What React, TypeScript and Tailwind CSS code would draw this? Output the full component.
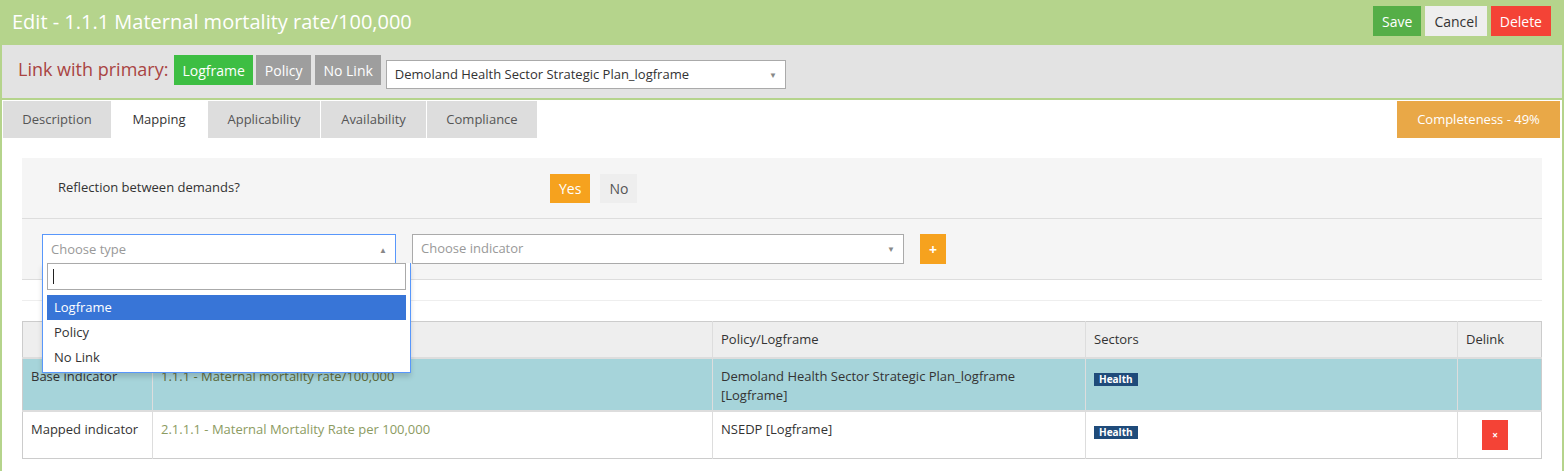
import React from "react";

const tabs = [
  { title: "Description", key: "tab_1", width: "w-[109px]" },
  { title: "Mapping", key: "tab_2", width: "w-[96px]", active: true },
  { title: "Applicability", key: "tab_3", width: "w-[113px]" },
  { title: "Availability", key: "tab_4", width: "w-[106px]" },
  { title: "Compliance", key: "tab_5", width: "w-[111px]" },
];

const HealthBadge = () => (
  <span className="inline-block bg-[#1f4b7a] px-[5px] text-[10px] font-bold leading-[13px] text-white">Health</span>
);

const Caret = ({ up }: { up?: boolean }) => (
  <span className="text-[8px] leading-none text-[#888]">{up ? "▲" : "▼"}</span>
);

const App = () => {
  return (
    <div className="min-h-[473px] bg-white font-['Open_Sans',sans-serif] text-[13px] text-[#333]">
      <div className="w-[1564px]">
        {/* header */}
        <div className="flex h-[45px] justify-between bg-[#b5d48c] pl-[12px] pr-[13px]">
          <div className="self-center pb-[2px] text-[20px] text-white">Edit - 1.1.1 Maternal mortality rate/100,000</div>
          <div className="mt-[6px] flex gap-[4px] self-start text-[14px]">
            <button className="h-[30px] bg-[#55ae47] px-[9px] text-white">Save</button>
            <button className="h-[30px] bg-[#eeeeee] px-[9px] text-[#333]">Cancel</button>
            <button className="h-[30px] bg-[#f44336] px-[9px] text-white">Delete</button>
          </div>
        </div>

        <div className="border-x-2 border-[#b5d48c]">
          {/* link with primary */}
          <div className="flex h-[55px] items-start border-b-2 border-[#b5d48c] bg-[#e3e3e3] pl-[16px]">
            <span className="mr-[6px] mt-[11px] text-[18px] leading-[26px] text-[#a94442]">Link with primary:</span>
            <button className="mt-[10px] h-[30px] bg-[#3dbe43] px-[8px] text-[14px] text-white">Logframe</button>
            <button className="ml-[3px] mt-[10px] h-[30px] bg-[#9e9e9e] px-[9px] text-[14px] text-white">Policy</button>
            <button className="ml-[4px] mt-[10px] h-[30px] bg-[#9e9e9e] px-[8px] text-[14px] text-white">No Link</button>
            <div className="ml-[5px] mt-[15px] flex h-[29px] w-[400px] items-center justify-between border border-[#aaa] bg-white pl-[8px] pr-[8px]">
              <span>Demoland Health Sector Strategic Plan_logframe</span>
              <Caret />
            </div>
          </div>

          {/* tabs */}
          <div className="flex items-start justify-between">
            <div className="flex">
              {tabs.map((tab) => (
                <div
                  key={tab.key}
                  className={
                    tab.active
                      ? `flex h-[38px] items-center justify-center bg-white pt-px text-[#333] ${tab.width}`
                      : `flex h-[38px] items-center justify-center border-l border-t border-white bg-[#dddddd] text-[#555] ${tab.width}`
                  }
                >
                  {tab.title}
                </div>
              ))}
            </div>
            <div className="mr-[2px] mt-px flex h-[37px] w-[163px] items-center justify-center bg-[#e9a847] text-white">
              Completeness - 49%
            </div>
          </div>

          {/* content */}
          <div className="relative px-[20px] pb-[12px] pt-[20px]">
            <div className="flex h-[61px] items-center border-b border-[#ddd] bg-[#f5f5f5] pl-[36px]">
              <div className="w-[492px]">Reflection between demands?</div>
              <button className="h-[29px] bg-[#f6a21e] px-[9px] text-[14px] text-white">Yes</button>
              <button className="ml-[10px] h-[29px] bg-[#eeeeee] px-[9px] text-[14px] text-[#555]">No</button>
            </div>
            <div className="flex h-[61px] items-center border-b border-[#ddd] bg-[#f5f5f5] pl-[20px]">
              <div className="relative h-[30px] w-[354px]">
                <div className="flex h-[30px] items-center justify-between border border-b-0 border-[#5897fb] bg-white pl-[8px] pr-[8px] text-[#999]">
                  <span>Choose type</span>
                  <Caret up />
                </div>
                <div className="absolute left-0 top-[29px] z-10 w-[369px] border border-t-0 border-[#5897fb] bg-white px-[4px] pb-[2px] shadow-[0_4px_5px_rgba(0,0,0,0.15)]">
                  <div className="flex h-[27px] items-center border border-[#aaa] bg-white pl-[5px]">
                    <span className="h-[15px] w-px bg-[#222]" />
                  </div>
                  <div className="mt-[5px] flex h-[25px] items-center bg-[#3875d7] pl-[7px] text-white">Logframe</div>
                  <div className="flex h-[25px] items-center pl-[7px]">Policy</div>
                  <div className="flex h-[25px] items-center pl-[7px]">No Link</div>
                </div>
              </div>
              <div className="ml-[16px] flex h-[30px] w-[492px] items-center justify-between border border-[#aaa] bg-white pl-[8px] pr-[8px] text-[#999]">
                <span>Choose indicator</span>
                <Caret />
              </div>
              <button className="ml-[16px] h-[30px] w-[26px] bg-[#f6a21e] text-[14px] font-bold text-white">+</button>
            </div>
            <div className="h-[21px] border-b border-[#eee]" />

            <table className="mt-[20px] w-full table-fixed border-collapse border border-[#ccc]">
              <colgroup>
                <col className="w-[130px]" />
                <col className="w-[560px]" />
                <col className="w-[373px]" />
                <col className="w-[372px]" />
                <col />
              </colgroup>
              <thead>
                <tr className="bg-[#eeeeee]">
                  <th className="border-b-2 border-r border-[#ddd] px-[8px] py-[8px] text-left font-normal leading-[19px]" />
                  <th className="border-b-2 border-r border-[#ddd] px-[8px] py-[8px] text-left font-normal leading-[19px]" />
                  <th className="border-b-2 border-r border-[#ddd] px-[8px] py-[8px] text-left font-normal leading-[19px]">Policy/Logframe</th>
                  <th className="border-b-2 border-r border-[#ddd] px-[8px] py-[8px] text-left font-normal leading-[19px]">Sectors</th>
                  <th className="border-b-2 border-[#ddd] px-[8px] py-[8px] text-left font-normal leading-[19px]">Delink</th>
                </tr>
              </thead>
              <tbody>
                <tr className="bg-[#a6d4da] align-top leading-[19px]">
                  <td className="border-r border-[#ddd] px-[8px] pb-[5px] pt-[8px]">Base indicator</td>
                  <td className="border-r border-[#ddd] px-[8px] pb-[5px] pt-[8px] text-[#5d6b3a]">1.1.1 - Maternal mortality rate/100,000</td>
                  <td className="border-r border-[#ddd] px-[8px] pb-[5px] pt-[8px]">
                    Demoland Health Sector Strategic Plan_logframe
                    <br />
                    [Logframe]
                  </td>
                  <td className="border-r border-[#ddd] px-[8px] pb-[5px] pt-[10px]">
                    <HealthBadge />
                  </td>
                  <td className="px-[8px] pb-[5px] pt-[8px]" />
                </tr>
                <tr className="border-t-2 border-[#ddd] bg-white align-top leading-[19px]">
                  <td className="border-r border-[#ddd] px-[8px] py-[8px]">Mapped indicator</td>
                  <td className="border-r border-[#ddd] px-[8px] py-[8px] text-[#8c9b62]">2.1.1.1 - Maternal Mortality Rate per 100,000</td>
                  <td className="border-r border-[#ddd] px-[8px] py-[8px]">NSEDP [Logframe]</td>
                  <td className="border-r border-[#ddd] px-[8px] pb-[8px] pt-[10px]">
                    <HealthBadge />
                  </td>
                  <td className="py-[8px] pl-[24px] text-left">
                    <button className="h-[30px] w-[26px] bg-[#f44336] text-[10px] font-bold text-white">×</button>
                  </td>
                </tr>
              </tbody>
            </table>
          </div>
        </div>
      </div>
    </div>
  );
};

export default App;
